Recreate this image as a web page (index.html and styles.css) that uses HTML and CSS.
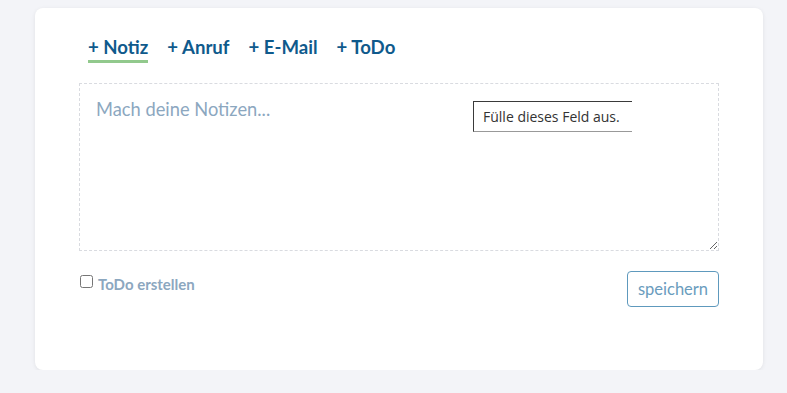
FILE: index.html
```html
<!DOCTYPE html>
<html lang="de">
<head>
  <meta charset="UTF-8">
  <title>Notiz</title>
  <link rel="stylesheet" href="styles.css">
</head>
<body>

  <div class="card">
    <!-- Tabs -->
    <div class="tabs">
      <span class="tab active">+ Notiz</span>
      <span class="tab">+ Anruf</span>
      <span class="tab">+ E-Mail</span>
      <span class="tab">+ ToDo</span>
    </div>

    <div class="note-wrap">
      <textarea class="note" placeholder="Mach deine Notizen..." required></textarea>
      <div class="tooltip">Fülle dieses Feld aus.</div>
    </div>

    <div class="footer">
      <label class="todo"><input type="checkbox"> ToDo erstellen</label>
      <button class="save">speichern</button>
    </div>
  </div>

</body>
</html>
```

FILE: styles.css
```css
body {
  margin: 0;
  background-color: #f3f4f8;
  font-family: Lato, "Open Sans", sans-serif;
}
.card {
  box-sizing: border-box;
  width: 728px;
  height: 362px;
  margin: 8px 0 0 35px;
  padding: 0 44px;
  background-color: #fff;
  border-radius: 8px;
  box-shadow: 0 1px 4px rgba(0, 0, 0, 0.08);
}
.tabs {
  display: flex;
  gap: 19px;
  padding: 26px 0 0 9px;
  height: 42px;
}
.tab {
  font-size: 18.6px;
  font-weight: bold;
  color: #0f5a8c;
  line-height: 26px;
  height: 26px;
  border-bottom: 3px solid transparent;
}
.tab.active {
  border-bottom-color: #92c98d;
}
.note-wrap {
  position: relative;
  margin-top: 7px;
}
.note {
  display: block;
  box-sizing: border-box;
  width: 100%;
  height: 168px;
  padding: 14px 16px;
  border: 1px dashed #d9dbe0;
  font-family: Lato, sans-serif;
  font-size: 18.3px;
  outline: none;
  resize: vertical;
}
.note::placeholder {
  color: #8ca7bf;
}
.tooltip {
  position: absolute;
  left: 394px;
  top: 18px;
  width: 159px;
  height: 31px;
  box-sizing: border-box;
  padding: 0 0 0 9px;
  border: 1px solid #3a3a3a;
  border-right: none;
  border-bottom-color: #999;
  background: #fff;
  font-family: "Open Sans", sans-serif;
  font-size: 14px;
  line-height: 29px;
  color: #333;
  white-space: nowrap;
  overflow: hidden;
}
.footer {
  display: flex;
  justify-content: space-between;
  align-items: flex-start;
  margin-top: 20px;
}
.todo {
  display: flex;
  align-items: center;
  gap: 5px;
  margin-top: 4px;
  font-size: 15px;
  font-weight: bold;
  color: #8ca7bf;
}
.todo input {
  margin: 0 0 5px 1px;
  width: 13px;
  height: 13px;
}
.save {
  width: 92px;
  height: 36px;
  background: #fff;
  border: 1px solid #5e99bd;
  border-radius: 4px;
  font-family: Lato, sans-serif;
  font-size: 16.5px;
  color: #6a9cbd;
  cursor: pointer;
}
```
